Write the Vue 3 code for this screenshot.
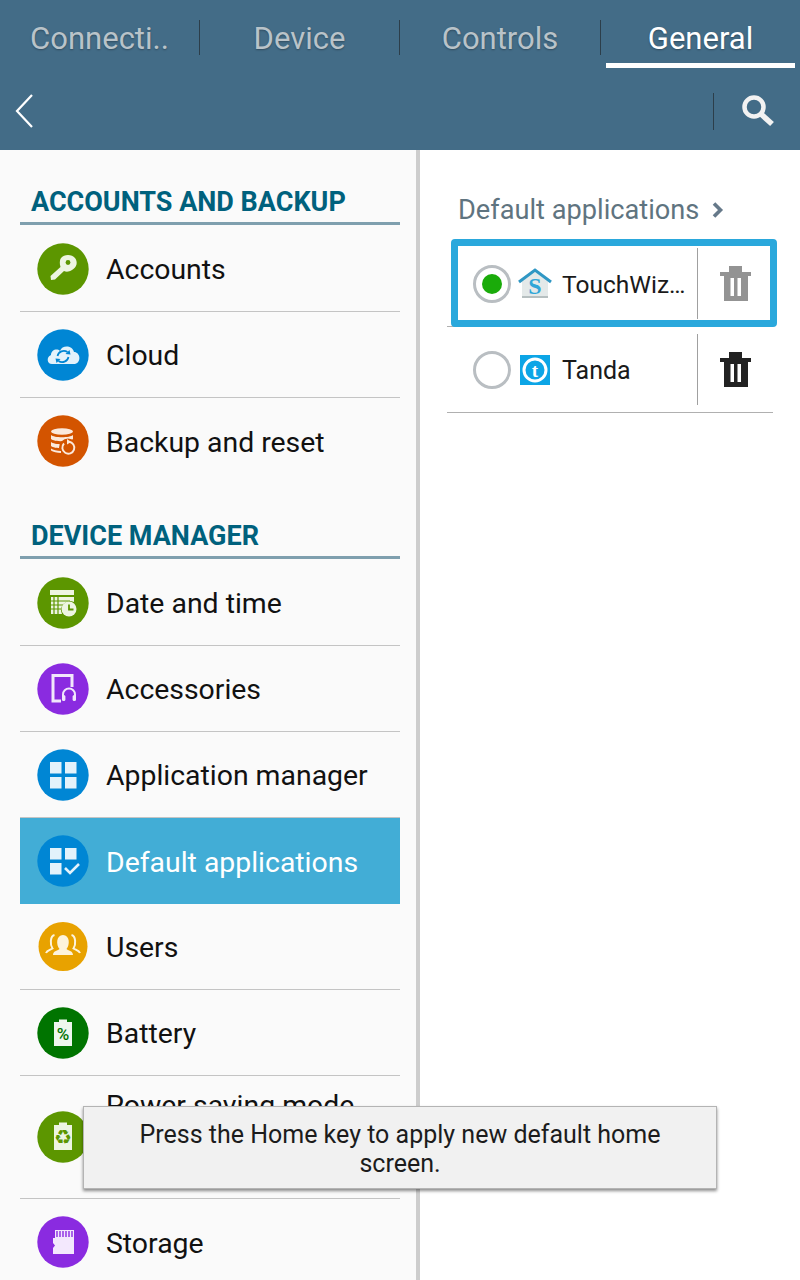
<script setup>
const firstGroup = [
  { name: 'Accounts', icon: 'key', color: '#5c9600' },
  { name: 'Cloud', icon: 'cloud', color: '#0086d4' },
  { name: 'Backup and reset', icon: 'backup', color: '#d35400' }
]
const secondGroup = [
  { name: 'Date and time', icon: 'date', color: '#5c9600' },
  { name: 'Accessories', icon: 'access', color: '#8a2be0' },
  { name: 'Application manager', icon: 'apps', color: '#0086d4' },
  { name: 'Default applications', icon: 'default', color: '#0086d4', active: true },
  { name: 'Users', icon: 'users', color: '#e8a200' },
  { name: 'Battery', icon: 'battery', color: '#007400' },
  { name: 'Power saving mode', icon: 'power', color: '#5c9600', tall: true },
  { name: 'Storage', icon: 'storage', color: '#8a2be0' }
]
const groups = [
  { title: 'ACCOUNTS AND BACKUP', items: firstGroup },
  { title: 'DEVICE MANAGER', items: secondGroup }
]
const tabs = ['Connecti..', 'Device', 'Controls', 'General']
</script>

<template>
  <div class="screen">
    <header class="header">
      <nav class="tabs">
        <div v-for="(t, i) in tabs" :key="t" class="tab" :class="{ on: i === 3 }">
          <span>{{ t }}</span>
        </div>
      </nav>
      <div class="actions">
        <svg class="back" width="18" height="34" viewBox="0 0 18 34">
          <path d="M17 1 L2 17 L17 33" fill="none" stroke="#fff" stroke-width="2.2" />
        </svg>
        <div class="search">
          <svg width="34" height="32" viewBox="0 0 34 32">
            <circle cx="13" cy="12" r="9.5" fill="none" stroke="#f2f2f2" stroke-width="4.5" />
            <path d="M20 19 L31 29" stroke="#f2f2f2" stroke-width="5.5" />
          </svg>
        </div>
      </div>
    </header>

    <main class="body">
      <section class="left">
        <div v-for="g in groups" :key="g.title" class="group">
          <h2 class="heading">{{ g.title }}</h2>
          <div
            v-for="item in g.items"
            :key="item.name"
            class="row"
            :class="{ active: item.active, tall: item.tall }"
          >
            <svg class="icon" width="52" height="52" viewBox="0 0 52 52">
              <circle cx="26" :cy="item.icon === 'users' ? 25.5 : 26" :r="item.icon === 'users' ? 24.5 : 25.7" :fill="item.color" />
              <g v-if="item.icon === 'key'" fill="#edf5e2">
                <path d="M24 15 C27 11 35 11 38 15 C41 19 40 24 35 27 C32 29 29 29 27 28 L18 36.5 L14 37 L13.5 33 L23.5 24 C22.5 21 22.5 17 24 15 Z" />
                <circle cx="31" cy="19.5" r="2.4" :fill="item.color" />
              </g>
              <g v-else-if="item.icon === 'cloud'">
                <path d="M15 35 C10 35 9 28 14 26 C14 21 20 19 23 22 C25 16 35 16 37 23 C43 23 45 33 38 35 Z" fill="#e3f2fb" />
                <path d="M20.5 27 A6.5 6.5 0 0 1 30.5 23 M31.5 28 A6.5 6.5 0 0 1 21.5 32" fill="none" stroke="#0086d4" stroke-width="1.7" />
                <path d="M33.5 25.5 L28.5 25 L32.5 21 Z M18.5 29.5 L23.5 30 L19.5 34 Z" fill="#0086d4" />
              </g>
              <g v-else-if="item.icon === 'backup'" fill="#fbe9dc">
                <ellipse cx="25" cy="16.5" rx="11" ry="3.2" />
                <path d="M14 20 C17 23 33 23 36 20 V24 C33 27 17 27 14 24 Z" />
                <path d="M14 27 C17 30 33 30 36 27 V31 C33 34 17 34 14 31 Z" />
                <circle cx="31" cy="32.5" r="9" :fill="item.color" />
                <path d="M27 28.5 A6 6 0 1 0 32 26.7" fill="none" stroke="#fbe9dc" stroke-width="1.9" />
                <path d="M30 24 L34 27 L30 29.5 Z" />
                <path d="M14 33.5 C16 35 20 36 24 36 L24 38 C20 38 16 37 14 35.5 Z" />
              </g>
              <g v-else-if="item.icon === 'date'" fill="#edf5e2">
                <rect x="13" y="13" width="24" height="5" />
                <path d="M14 20 H37 V25 A9 9 0 0 0 25 37 H14 Z" />
                <path d="M17 20 V37 M21 20 V37 M14 24 H33 M14 28 H26 M14 32 H25" stroke="#5c9600" stroke-width="1.2" />
                <circle cx="32" cy="32" r="7.5" />
                <path d="M32 27.5 V32.5 H36.5" fill="none" stroke="#5c9600" stroke-width="1.8" />
              </g>
              <g v-else-if="item.icon === 'access'">
                <path d="M24 38 H16 V12.5 H35 V24" fill="none" stroke="#f1e7fb" stroke-width="3" />
                <path d="M26 34 V31.5 A6 6 0 0 1 38 31.5 V34" fill="none" stroke="#f1e7fb" stroke-width="2" />
                <rect x="25" y="32" width="3.4" height="6" rx="1.5" fill="#f1e7fb" />
                <rect x="35.6" y="32" width="3.4" height="6" rx="1.5" fill="#f1e7fb" />
              </g>
              <g v-else-if="item.icon === 'apps'" fill="#e3f2fb">
                <rect x="13" y="13" width="11.5" height="11.5" />
                <rect x="28" y="13" width="11.5" height="11.5" />
                <rect x="13" y="28" width="11.5" height="11.5" />
                <rect x="28" y="28" width="11.5" height="11.5" />
              </g>
              <g v-else-if="item.icon === 'default'" fill="#e3f2fb">
                <rect x="13" y="13" width="11.5" height="11.5" />
                <rect x="28" y="13" width="11.5" height="11.5" />
                <rect x="13" y="28" width="11.5" height="11.5" />
                <path d="M28 33 L33 38 L42 29" fill="none" stroke="#e3f2fb" stroke-width="2.6" />
              </g>
              <g v-else-if="item.icon === 'users'">
                <path d="M16 34 C16 30 20 30 22.5 28 C19 24 19 14 26 14 C33 14 33 24 29.5 28 C32 30 36 30 36 34 Z" fill="#fdf3dc" />
                <path d="M17.5 14 C13 15 13 24 15.5 27.5 C13 29 10 29.5 9 32 M34.5 14 C39 15 39 24 36.5 27.5 C39 29 42 29.5 43 32" fill="none" stroke="#fdf3dc" stroke-width="2" />
              </g>
              <g v-else-if="item.icon === 'battery'">
                <path d="M22 12.5 H30 V15 H35 V39 H17 V15 H22 Z" fill="#eef7ee" />
                <text x="26" y="33" class="pct" text-anchor="middle">%</text>
              </g>
              <g v-else-if="item.icon === 'power'">
                <path d="M22 11.5 H30 V14 H35 V39 H17 V14 H22 Z" fill="#edf5e2" />
                <text x="26" y="33" class="rec" text-anchor="middle">♻</text>
              </g>
              <g v-else-if="item.icon === 'storage'">
                <path d="M18 14 H37 V38 H16 V32 L18 29.5 L16 27 V22 H18 Z" fill="#f3e8fd" />
                <path d="M20 15 V21 M23 15 V21 M26 15 V21 M29 15 V21 M32 15 V21 M35 15 V21" stroke="#8a2be0" stroke-width="1.4" />
              </g>
            </svg>
            <span class="label">{{ item.name }}</span>
          </div>
        </div>
      </section>

      <section class="right">
        <div class="crumb">
          <span>Default applications</span>
          <svg width="14" height="18" viewBox="0 0 14 18">
            <path d="M3 2.5 L9.5 9 L3 15.5" fill="none" stroke="#66798a" stroke-width="3.6" />
          </svg>
        </div>
        <div class="app selected">
          <div class="app-main">
            <span class="radio"><i></i></span>
            <svg width="34" height="32" viewBox="0 0 34 32">
              <path d="M4 13 L17 3 L30 13 V30 H4 Z" fill="#e4e9e9" />
              <path d="M4 28 H30 V30 H4 Z" fill="#b6bfc0" />
              <path d="M1 14 L17 2 L33 14" fill="none" stroke="#2f97c4" stroke-width="3" />
              <text x="17" y="26" class="s" text-anchor="middle">S</text>
            </svg>
            <span class="app-name wiz">TouchWiz…</span>
          </div>
          <div class="app-del">
            <svg width="31" height="35" viewBox="0 0 31 35">
              <path d="M0 6 H9 V0 H22 V6 H31 V10 H28 V35 H4 V10 H0 Z M10.5 12 V30 H14 V12 Z M17.5 12 V30 H21 V12 Z" fill="#939393" fill-rule="evenodd" />
            </svg>
          </div>
        </div>
        <div class="app">
          <div class="app-main">
            <span class="radio"></span>
            <svg class="tanda" width="34" height="32" viewBox="0 0 34 32">
              <rect x="2" y="1" width="30" height="30" fill="#0ca5e6" />
              <circle cx="17" cy="16" r="11" fill="none" stroke="#fff" stroke-width="3" />
              <text x="17" y="23" class="t" text-anchor="middle">t</text>
            </svg>
            <span class="app-name">Tanda</span>
          </div>
          <div class="app-del">
            <svg width="31" height="35" viewBox="0 0 31 35">
              <path d="M0 6 H9 V0 H22 V6 H31 V10 H28 V35 H4 V10 H0 Z M10.5 12 V30 H14 V12 Z M17.5 12 V30 H21 V12 Z" fill="#222" fill-rule="evenodd" />
            </svg>
          </div>
        </div>
      </section>
    </main>

    <div class="toast">Press the Home key to apply new default home screen.</div>
  </div>
</template>

<style scoped>
.screen {
  position: relative;
  width: 800px;
  height: 1280px;
  overflow: hidden;
  display: flex;
  flex-direction: column;
  font-family: Roboto, "Liberation Sans", sans-serif;
  background: #fff;
}
.header {
  height: 150px;
  flex: none;
  background: #436c87;
}
.tabs {
  display: flex;
  height: 76px;
  padding-top: 20px;
  box-sizing: border-box;
}
.tab {
  position: relative;
  width: 200px;
  height: 35px;
  display: flex;
  align-items: center;
  justify-content: center;
  font-size: 31px;
  color: #b9c3c9;
  text-shadow: 0 1px 2px rgba(0, 0, 0, 0.3);
  box-sizing: border-box;
}
.tab span {
  padding-top: 2px;
}
.tab:not(:last-child) {
  border-right: 1px solid #2c3e4a;
}
.tab:nth-child(3) {
  width: 201px;
}
.tab:last-child {
  width: 199px;
}
.tab.on {
  color: #fff;
}
.tab.on::after {
  content: "";
  position: absolute;
  left: 5px;
  right: 5px;
  top: 43px;
  height: 5px;
  background: #fff;
}
.actions {
  display: flex;
  align-items: center;
  justify-content: space-between;
  height: 70px;
  padding: 0 25px 0 15px;
}
.search {
  display: flex;
  align-items: center;
  height: 37px;
  padding-left: 27px;
  border-left: 1px solid #2c3e4a;
}
.body {
  flex: 1;
  display: flex;
  min-height: 0;
}
.left {
  flex: none;
  width: 380px;
  padding: 0 16px 0 20px;
  background: #fafafa;
  border-right: 4px solid #cdcdcd;
}
.group {
  display: flex;
  flex-direction: column;
}
.heading {
  margin: 0 0 1px;
  height: 75px;
  box-sizing: border-box;
  padding: 35px 0 0 11px;
  font-size: 27px;
  line-height: 34px;
  font-weight: 700;
  color: #00617d;
  border-bottom: 3px solid #7f9fae;
}
.row {
  display: flex;
  align-items: center;
  height: 86px;
  box-sizing: border-box;
  padding-left: 17px;
  gap: 17px;
  font-size: 28.4px;
  color: #111;
  border-bottom: 1px solid #c4c4c4;
  flex: none;
}
.label {
  padding-top: 2px;
}
.row:last-child {
  border-bottom: 0;
}
.row.active {
  background: #42add6;
  color: #fff;
  border-bottom: 0;
}
.row.tall {
  height: 123px;
  align-items: flex-start;
  padding-top: 35px;
}
.row.tall .label {
  margin-top: -22px;
  padding-top: 0;
  line-height: 34px;
}
.icon {
  flex: none;
}
.pct {
  font: 500 17px Roboto, sans-serif;
  fill: #007400;
}
.rec {
  font: 20px "DejaVu Sans", sans-serif;
  fill: #5c9600;
}
.right {
  flex: 1;
  padding: 0 27px;
}
.crumb {
  display: flex;
  align-items: center;
  gap: 12px;
  height: 91px;
  padding: 28px 0 0 11px;
  box-sizing: border-box;
  font-size: 27.2px;
  color: #5f7480;
}
.app {
  position: relative;
  display: flex;
  height: 86px;
  box-sizing: border-box;
  border-bottom: 1px solid #b0b0b0;
}
.app.selected::after {
  content: "";
  position: absolute;
  left: 4px;
  right: -4px;
  top: -2px;
  bottom: -1px;
  border: 7px solid #2aa8dc;
  border-radius: 4px;
}
.app-main {
  width: 251px;
  display: flex;
  align-items: center;
  padding-left: 26px;
  box-sizing: border-box;
  margin: 7px 0;
  border-right: 1px solid #a0a0a0;
  font-size: 25px;
  color: #1a1a1a;
}
.radio {
  flex: none;
  width: 38px;
  height: 38px;
  box-sizing: border-box;
  border: 3px solid #b9bec2;
  border-radius: 50%;
  display: flex;
  align-items: center;
  justify-content: center;
  margin-right: 7px;
}
.radio i {
  width: 20px;
  height: 20px;
  border-radius: 50%;
  background: #1aab0a;
}
.app-main svg {
  flex: none;
}
.app-name {
  margin-left: 10px;
  padding-top: 2px;
  white-space: nowrap;
}
.app-name.wiz {
  font-size: 24.5px;
}
.app-del {
  flex: 1;
  display: flex;
  align-items: center;
  justify-content: center;
}
.s {
  font: 700 24px "Liberation Serif", serif;
  fill: #2fa6d8;
}
.t {
  font: 700 19px "Liberation Serif", serif;
  fill: #fff;
}
.toast {
  position: absolute;
  left: 83px;
  top: 1106px;
  width: 634px;
  height: 83px;
  box-sizing: border-box;
  padding: 13px 40px;
  background: #f1f1f1;
  border: 1px solid #b4b4b4;
  box-shadow: 0 2px 3px rgba(0, 0, 0, 0.45);
  font-size: 25px;
  line-height: 29px;
  color: #1c1c1c;
  text-align: center;
}
</style>
